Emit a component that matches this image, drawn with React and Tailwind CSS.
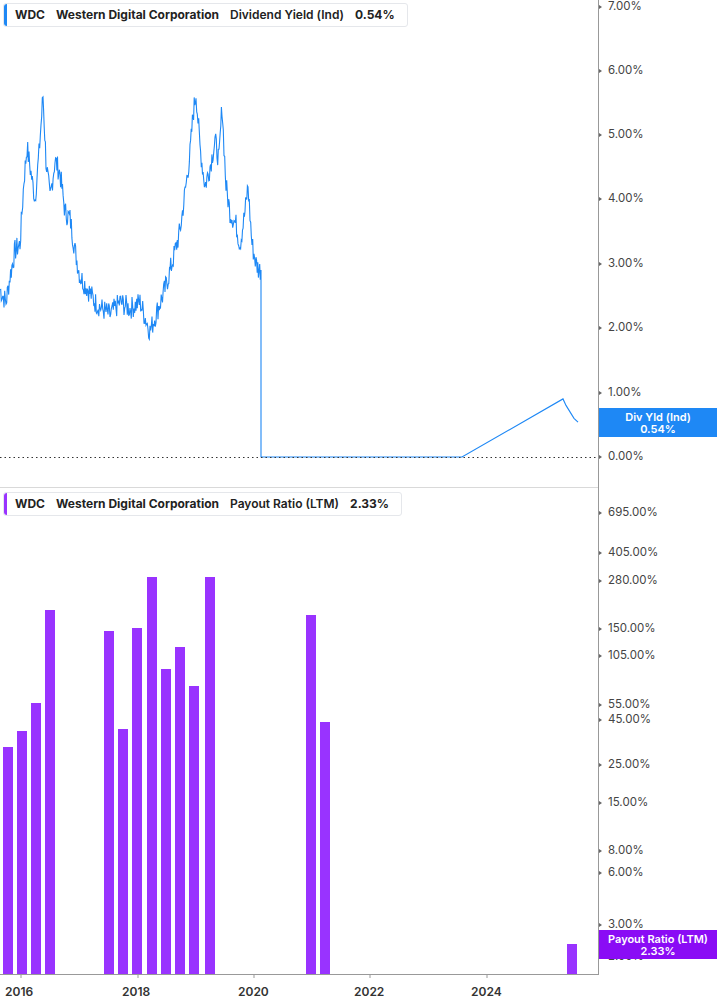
import React from "react";

const kp = [[0,2.6],[6,2.4],[10,2.8],[15,3.2],[20,3.3],[24,4.3],[27,4.8],[31,4.4],[35,4.0],[39,4.7],[43,5.6],[46,4.6],[50,4.0],[55,4.6],[60,4.4],[65,3.8],[70,3.7],[75,3.2],[80,2.8],[88,2.6],[95,2.4],[102,2.3],[110,2.2],[120,2.4],[130,2.3],[140,2.4],[150,1.95],[158,2.3],[165,2.6],[172,3.0],[180,3.5],[185,4.1],[190,4.7],[193,5.3],[196,5.65],[200,4.8],[205,4.2],[210,4.5],[215,4.9],[219,4.6],[222,5.45],[226,4.2],[230,3.8],[236,3.6],[240,3.3],[245,3.8],[248,4.2],[252,3.3],[256,3.0],[259,2.9],[261,2.9],[261,0],[462,0],[563,0.9],[566,0.8],[570,0.7],[574,0.6],[578,0.54]];
const Y = (v) => 457 - v * 64.5;
function linePath() {
  const pts = [];
  let seed = 7;
  const rnd = () => { seed = (seed * 9301 + 49297) % 233280; return seed / 233280 - 0.5; };
  for (let i = 0; i < kp.length - 1; i++) {
    const [x0, v0] = kp[i], [x1, v1] = kp[i + 1];
    if (x0 >= 261) { pts.push([x0, v0]); continue; }
    const n = Math.max(1, Math.round((x1 - x0) * 1.5));
    for (let j = 0; j < n; j++) {
      const t = j / n;
      const v = v0 + (v1 - v0) * t + rnd() * 0.35 * (x0 < 260 ? 1 : 0);
      pts.push([x0 + (x1 - x0) * t, v]);
    }
  }
  pts.push(kp[kp.length - 1]);
  return "M" + pts.map(([x, v]) => `${x.toFixed(1)},${Y(v).toFixed(1)}`).join(" L");
}
const bars = [[3,747],[17,731],[31,703],[45,610],[104,631],[118,729],[132,628],[147,577],[161,669],[175,647],[189,686],[205,577],[306,615],[320,722],[567,944]];
const topLabels = [["7.00%",7],["6.00%",71],["5.00%",135],["4.00%",199],["3.00%",264],["2.00%",328],["1.00%",393],["0.00%",457]];
const botLabels = [["695.00%",513],["405.00%",553],["280.00%",581],["150.00%",629],["105.00%",656],["55.00%",705],["45.00%",720],["25.00%",765],["15.00%",803],["8.00%",851],["6.00%",873],["3.00%",925],["2.00%",957]];
const years = [["2016",21],["2018",138],["2020",254],["2022",370],["2024",487]];

function Legend({ color, label, value }) {
  return (
    <div className="flex items-center gap-[11px] bg-white border border-[#e5e7eb] rounded-[3px] h-[24px] pr-[12px] text-[12px] font-semibold text-[#222]" style={{}}>
      <div className={`w-[3px] h-full rounded-l-[3px] ${color}`} />
      <span className="font-bold -ml-[3px]">WDC</span>
      <span className="font-bold">Western Digital Corporation</span>
      <span>{label}</span>
      <span className="font-bold">{value}</span>
    </div>
  );
}

export default function App() {
  return (
    <div className="relative w-[717px] h-[1005px] bg-white overflow-hidden" style={{ fontFamily: "Inter, 'Liberation Sans', sans-serif" }}>
      <svg width="717" height="1005" className="absolute left-0 top-0">
        <path d={linePath()} fill="none" stroke="#1e88f5" strokeWidth="1.1" />
        <line x1="0" y1="457.5" x2="598" y2="457.5" stroke="#333" strokeDasharray="1.5 3" />
        <line x1="0" y1="487.5" x2="598" y2="487.5" stroke="#d9d9d9" />
        <line x1="598.5" y1="0" x2="598.5" y2="974" stroke="#999" />
        <line x1="0" y1="974.5" x2="599" y2="974.5" stroke="#999" />
        {bars.map(([x, t], i) => <rect key={i} x={x} y={t} width="10" height={974 - t} fill="#9933ff" />)}
        {[...topLabels, ...botLabels].map(([l, y]) => <path key={l + y} d={`M599,${y - 2} L602,${y} L599,${y + 2}z`} fill="#666" />)}
        {years.map(([l, x]) => <line key={l} x1={x} y1="974" x2={x} y2="978" stroke="#999" />)}
      </svg>
      {topLabels.map(([l, y]) => <div key={l} className="absolute left-[608px] text-[11.5px] text-[#444] leading-none" style={{ top: y - 6 }}>{l}</div>)}
      {botLabels.map(([l, y]) => <div key={l} className="absolute left-[608px] text-[11.5px] text-[#444] leading-none" style={{ top: y - 6 }}>{l}</div>)}
      {years.map(([l, x]) => <div key={l} className="absolute text-[12px] font-semibold text-[#333] leading-none" style={{ top: 986, left: x - 16 }}>{l}</div>)}
      <div className="absolute left-[3px] top-[3px]"><Legend color="bg-[#1e88f5]" label="Dividend Yield (Ind)" value="0.54%" /></div>
      <div className="absolute left-[3px] top-[492px]"><Legend color="bg-[#9933ff]" label="Payout Ratio (LTM)" value="2.33%" /></div>
      <div className="absolute left-[599px] top-[408px] w-[118px] h-[29px] bg-[#1e88f5] text-white text-[11px] font-semibold flex flex-col items-center justify-center leading-[12px]">
        <span>Div Yld (Ind)</span><span>0.54%</span>
      </div>
      <div className="absolute left-[599px] top-[930px] w-[118px] h-[29px] bg-[#8a0cf5] text-white text-[11px] font-semibold flex flex-col items-center justify-center leading-[12px]">
        <span>Payout Ratio (LTM)</span><span>2.33%</span>
      </div>
    </div>
  );
}
